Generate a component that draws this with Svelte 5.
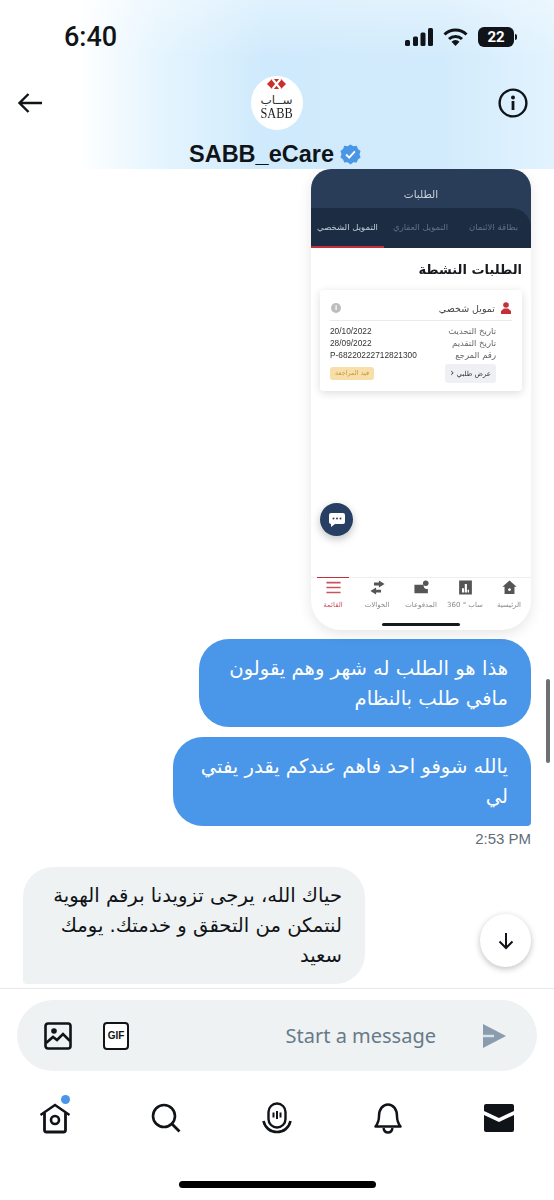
<script>
  const tabs = ['التمويل الشخصي', 'التمويل العقاري', 'بطاقة الائتمان']
  const details = [
    ['تاريخ التحديث', '20/10/2022'],
    ['تاريخ التقديم', '28/09/2022'],
    ['رقم المرجع', 'P-68220222712821300']
  ]
  const appNav = [
    { label: 'الرئيسية', icon: 'M2 11 12 2l10 9h-3v10H5V11Zm10 2a2 2 0 1 0 .01 0Z' },
    { label: 'ساب ° 360', icon: 'M3 2h18v20H3Zm4 11v6h3v-6Zm4-6v12h3V7Zm4 8v4h2v-4Z' },
    { label: 'المدفوعات', icon: 'M2 8h13v2a5 5 0 0 0 6 4v6H2Zm16-6a4 4 0 1 0 .01 0Z' },
    { label: 'الحوالات', icon: 'M14 2l8 5-8 5V9H7V5h7ZM10 12v3h7v4h-7v3l-8-5Z' },
    { label: 'القائمة', icon: 'M2 4h20v2.200H2Zm0 7h20v2.200H2Zm0 7h20v2.200H2Z', active: true }
  ]
</script>

<div class="screen">
  <header>
    <div class="status">
      <span class="clock">6:40</span>
      <div class="status-icons">
        <svg width="28" height="18" viewBox="0 0 28 18"><g fill="#101418"><rect x="0" y="12" width="5" height="6" rx="1.500"/><rect x="8" y="8.500" width="5" height="9.500" rx="1.500"/><rect x="15.500" y="4.500" width="5" height="13.500" rx="1.500"/><rect x="23" y="0" width="5" height="18" rx="1.500"/></g></svg>
        <svg width="25" height="18" viewBox="0 0 25 18"><g fill="none" stroke="#101418" stroke-width="3"><path d="M1.500 6.500a15.500 15.500 0 0 1 22 0"/><path d="M6 11a9.500 9.500 0 0 1 13 0"/></g><path d="M12.500 18l-4-4.300a5.800 5.800 0 0 1 8 0Z" fill="#101418"/></svg>
        <div class="battery"><span>22</span></div>
      </div>
    </div>
    <div class="profile-row">
      <svg class="back" width="26" height="22" viewBox="0 0 26 22"><path d="M25 11H2.500M11.500 2 2.500 11l9 9" fill="none" stroke="#101418" stroke-width="2.400"/></svg>
      <div class="avatar">
        <svg width="19" height="10" viewBox="0 0 19 10"><path d="M5 0h9l5 5-5 5H5L0 5Z" fill="#c9302c"/><path d="M5.500 0 13.500 10M13.500 0 5.500 10" stroke="#fff" stroke-width="2.200"/></svg>
        <span class="logo-ar">ســاب</span>
        <span class="logo-en">SABB</span>
      </div>
      <svg class="info" width="30" height="30" viewBox="0 0 30 30"><circle cx="15" cy="15" r="13.400" fill="none" stroke="#101418" stroke-width="2.400"/><circle cx="15" cy="9.500" r="2" fill="#101418"/><rect x="13.600" y="13" width="2.800" height="9" fill="#101418"/></svg>
    </div>
    <div class="name-row">
      <span class="name">SABB_eCare</span>
      <svg width="21" height="21" viewBox="0 0 24 24"><path d="M12 0l3.300 2 3.800-.4 1.400 3.500 3 2.400-1.200 3.600 1.200 3.700-3 2.300-1.400 3.600-3.800-.4L12 22.900l-3.300-2.600-3.800.4-1.400-3.600-3-2.300 1.200-3.700L.5 7.500l3-2.400 1.400-3.500 3.800.4Z" fill="#4a96e6" transform="translate(0 .5)"/><path d="M7 12l3.500 3.500L17 8.500" fill="none" stroke="#fff" stroke-width="2.200"/></svg>
    </div>
  </header>

  <main>
    <div class="attachment" dir="rtl">
      <div class="app-top">
        <div class="app-status" dir="ltr"><span>2:51</span><span>4G</span></div>
        <div class="app-title">الطلبات</div>
        <div class="app-tabs" dir="ltr">
          {#each tabs as tab, index (index)}
            <div class="app-tab" class:current={index === 0}>{tab}</div>
          {/each}
        </div>
      </div>
      <div class="app-body">
        <h2>الطلبات النشطة</h2>
        <div class="card">
          <div class="card-head">
            <svg width="10" height="12" viewBox="0 0 10 12"><circle cx="5" cy="3" r="2.800" fill="#c4303a"/><path d="M0 12V9l3-2.500h4L10 9v3Z" fill="#c4303a"/></svg>
            <span class="card-title">تمويل شخصي</span>
            <span class="card-info">i</span>
          </div>
          <div class="rows">
            {#each details as row, index (index)}
              <div class="row"><span>{row[0]}</span><b>{row[1]}</b></div>
            {/each}
          </div>
          <div class="card-foot">
            <span class="view-btn">عرض طلبي <i>&lsaquo;</i></span>
            <span class="pill">قيد المراجعة</span>
          </div>
        </div>
      </div>
      <div class="fab">
        <svg width="16" height="14" viewBox="0 0 16 14"><path d="M2 0h12a2 2 0 0 1 2 2v7a2 2 0 0 1-2 2H6l-4 3v-3a2 2 0 0 1-2-2V2a2 2 0 0 1 2-2Z" fill="#fff"/><g fill="#263f63"><circle cx="4.500" cy="5.500" r="1"/><circle cx="8" cy="5.500" r="1"/><circle cx="11.500" cy="5.500" r="1"/></g></svg>
      </div>
      <nav class="app-nav">
        {#each appNav as item, index (index)}
          <div class="app-nav-item" class:active={item.active}>
            <svg width="17" height="17" viewBox="0 0 24 24"><path d={item.icon} fill-rule="evenodd"/></svg>
            <span>{item.label}</span>
          </div>
        {/each}
      </nav>
      <div class="app-home"></div>
    </div>

    <div class="bubble mine first" dir="rtl">هذا هو الطلب له شهر وهم يقولون مافي طلب بالنظام</div>
    <div class="bubble mine last" dir="rtl">يالله شوفو احد فاهم عندكم يقدر يفتي لي</div>
    <div class="time">2:53 PM</div>
    <div class="bubble theirs" dir="rtl">حياك الله، يرجى تزويدنا برقم الهوية لنتمكن من التحقق و خدمتك. يومك سعيد</div>

    <div class="scrollbar"></div>
    <div class="down">
      <svg width="18" height="20" viewBox="0 0 18 20"><path d="M9 2v15M2.500 10.500 9 17l6.500-6.500" fill="none" stroke="#101418" stroke-width="2"/></svg>
    </div>
  </main>

  <div class="composer-wrap">
    <div class="composer">
      <svg width="28" height="28" viewBox="0 0 28 28"><rect x="1.500" y="1.500" width="25" height="25" rx="2.500" fill="none" stroke="#101418" stroke-width="2.600"/><circle cx="10" cy="9" r="2.800" fill="#101418"/><path d="M2 21l7-6 4 3 6-6 7 7" fill="none" stroke="#101418" stroke-width="2.600"/></svg>
      <div class="gif"><span>GIF</span></div>
      <span class="placeholder">Start a message</span>
      <svg class="send" width="26" height="26" viewBox="0 0 26 26"><path d="M2 1l23 12L2 25Z" fill="#8a9dae"/><path d="M2 11.800h11v2.400H2Z" fill="#dbe3e9"/></svg>
    </div>
  </div>

  <nav class="tabbar">
    <div class="tab">
      <svg width="32" height="32" viewBox="0 0 32 32"><path d="M1.500 13 16 3l14.500 10" fill="none" stroke="#101418" stroke-width="2.400"/><path d="M5.500 11v17a2 2 0 0 0 2 2h17a2 2 0 0 0 2-2V11" fill="none" stroke="#101418" stroke-width="2.800"/><circle cx="16" cy="18" r="4" fill="none" stroke="#101418" stroke-width="2.600"/></svg>
      <span class="dot"></span>
    </div>
    <div class="tab">
      <svg width="30" height="30" viewBox="0 0 30 30"><circle cx="13" cy="13" r="11" fill="none" stroke="#101418" stroke-width="2.600"/><path d="M21 21l7.500 7.500" stroke="#101418" stroke-width="2.800"/></svg>
    </div>
    <div class="tab">
      <svg width="30" height="32" viewBox="0 0 30 32"><rect x="6.500" y="1.500" width="17" height="24" rx="8.500" fill="none" stroke="#101418" stroke-width="2.400"/><path d="M11.500 10.500v5M15 9v8M18.500 10.500v5" stroke="#101418" stroke-width="2"/><path d="M1.500 19c1.500 7 7 11 13.500 11s12-4 13.500-11" fill="none" stroke="#101418" stroke-width="2.600"/></svg>
    </div>
    <div class="tab">
      <svg width="28" height="32" viewBox="0 0 28 32"><path d="M1.500 24.500C3.500 22 5 20 5 14c0-7 4-11.500 9-11.500S23 7 23 14c0 6 1.500 8 3.500 10.500Z" fill="none" stroke="#101418" stroke-width="2.500" stroke-linejoin="round"/><path d="M9.500 26c.5 3 2.300 4.500 4.500 4.500s4-1.500 4.500-4.500" fill="none" stroke="#101418" stroke-width="2.400"/></svg>
    </div>
    <div class="tab">
      <svg width="30" height="28" viewBox="0 0 30 28"><path d="M2 0h26a2 2 0 0 1 2 2v5L15 14 0 7V2a2 2 0 0 1 2-2Z" fill="#101418"/><path d="M0 11l15 7 15-7v15a2 2 0 0 1-2 2H2a2 2 0 0 1-2-2Z" fill="#101418"/></svg>
    </div>
  </nav>
  <div class="home-wrap"><div class="home-bar"></div></div>
</div>

<style>
:global(body) {
  margin: 0;
  background: #fff;
}

.screen {
  position: relative;
  width: 554px;
  height: 1200px;
  display: flex;
  flex-direction: column;
  overflow: hidden;
  color: #101418;
  font-family: "DejaVu Sans", sans-serif;
}

header {
  height: 169px;
  flex-shrink: 0;
  box-sizing: border-box;
  background:
    linear-gradient(180deg, rgba(255, 255, 255, 0.35), rgba(255, 255, 255, 0) 35%),
    linear-gradient(90deg, #fff 14%, #e6f5fe 28%, #cfeafc 48%, #d2ebfc 80%, #e2f3fe 100%);
  z-index: 1;
}

.status {
  height: 22px;
  padding: 26px 39px 0 64px;
  display: flex;
  justify-content: space-between;
  align-items: center;
}

.clock {
  font: 500 27px Roboto, sans-serif;
}

.status-icons {
  display: flex;
  align-items: center;
  gap: 10px;
}

.battery {
  position: relative;
  width: 36px;
  height: 20px;
  border-radius: 6px;
  background: #101418;
  color: #fff;
  display: flex;
  align-items: center;
  justify-content: center;
  margin-right: 1px;
  font: 700 15px Roboto, sans-serif;
}

.battery::after {
  content: "";
  position: absolute;
  right: -3px;
  top: 7px;
  width: 2px;
  height: 6px;
  background: #101418;
  border-radius: 0 2px 2px 0;
}

.profile-row {
  margin-top: 29px;
  padding: 0 26px 0 17px;
  height: 52px;
  display: flex;
  align-items: center;
  justify-content: space-between;
}

.avatar {
  width: 52px;
  height: 54px;
  margin-left: 12px;
  border-radius: 50%;
  background: #fff;
  display: flex;
  flex-direction: column;
  align-items: center;
  padding-top: 3px;
  box-sizing: border-box;
}

.logo-ar {
  font-size: 12px;
  line-height: 13px;
  margin-top: 5px;
  color: #333;
}

.logo-en {
  font: 15px/12px "Liberation Serif", serif;
  color: #222;
  transform: scaleX(0.82);
}

.name-row {
  margin-top: 9px;
  display: flex;
  justify-content: center;
  align-items: center;
  gap: 6px;
  padding-right: 4px;
}

.name {
  font: 700 23.500px/32px "Liberation Sans", sans-serif;
}

main {
  position: relative;
  flex: 1;
  min-height: 0;
  display: flex;
  flex-direction: column;
  align-items: flex-end;
  padding: 0 23px 0 23px;
  overflow: hidden;
}

.attachment {
  position: relative;
  width: 220px;
  height: 461px;
  flex-shrink: 0;
  background: #fff;
  border-radius: 20px 20px 30px 30px;
  box-shadow: 0 4px 14px rgba(0, 0, 0, 0.1);
  display: flex;
  flex-direction: column;
  overflow: hidden;
  filter: blur(0.25px);
}

.app-top {
  background: #2a3d58;
  height: 79px;
  display: flex;
  flex-direction: column;
  flex-shrink: 0;
}

.app-status {
  height: 4px;
  overflow: hidden;
  display: flex;
  justify-content: space-between;
  padding: 0 16px 0 28px;
  font-size: 9px;
  line-height: 0;
  color: #e8edf3;
}

.app-title {
  height: 39px;
  line-height: 50px;
  text-align: center;
  font-size: 10.500px;
  color: #c9d1dc;
}

.app-tabs {
  flex: 1;
  display: flex;
  background: #1c2c42;
  border-radius: 0 20px 0 0;
}

.app-tab {
  width: 73px;
  text-align: center;
  font-size: 8.500px;
  line-height: 38px;
  color: #5f7088;
  white-space: nowrap;
  box-sizing: border-box;
}

.app-tab.current {
  color: #c3ccd7;
  border-bottom: 2px solid #c4303a;
}

.app-body {
  flex: 1;
  padding: 10px 9px 0 9px;
}

h2 {
  margin: 0;
  font-size: 13px;
  line-height: 24px;
  font-weight: 700;
  color: #16191d;
}

.card {
  margin-top: 8px;
  height: 101px;
  box-sizing: border-box;
  padding: 8px 10px;
  border-radius: 3px;
  background: #fff;
  box-shadow: 0 2px 9px rgba(0, 0, 0, 0.14);
  display: flex;
  flex-direction: column;
}

.card-head {
  height: 20px;
  display: flex;
  align-items: center;
  gap: 6px;
  padding-bottom: 2px;
  padding-right: 1px;
  border-bottom: 1px solid #e9eaec;
}

.card-title {
  font-size: 9.500px;
  color: #444;
  flex: 1;
}

.card-info {
  width: 10px;
  height: 10px;
  margin-left: 1px;
  border-radius: 50%;
  background: #bdbdbd;
  color: #fff;
  font: 700 8px/10px "Liberation Sans", sans-serif;
  text-align: center;
}

.rows {
  margin-top: 4px;
  padding-right: 16px;
}

.row {
  display: flex;
  justify-content: space-between;
  font-size: 8.500px;
  line-height: 12px;
  color: #666;
}

.row b {
  font: 400 8.300px/12px "Liberation Sans", sans-serif;
  color: #333;
}

.card-foot {
  margin-top: 3px;
  padding-right: 16px;
  display: flex;
  justify-content: space-between;
  align-items: center;
}

.view-btn {
  background: #eff0f3;
  border-radius: 3px;
  padding: 0 5px;
  font-size: 7px;
  line-height: 17px;
  color: #333;
}

.view-btn i {
  font-style: normal;
  font-size: 10px;
}

.pill {
  background: #f8dea9;
  border-radius: 3px;
  padding: 0 5px;
  font-size: 6.500px;
  line-height: 13px;
  color: #c49a45;
}

.fab {
  position: absolute;
  left: 9px;
  top: 334px;
  width: 33px;
  height: 33px;
  border-radius: 50%;
  background: #263f63;
  box-shadow: 0 3px 8px rgba(0, 0, 0, 0.25);
  display: flex;
  align-items: center;
  justify-content: center;
}

.app-nav {
  display: grid;
  grid-template-columns: repeat(5, 44px);
  height: 45px;
  border-top: 1px solid #eeeeee;
}

.app-nav-item {
  padding-top: 1px;
  display: flex;
  flex-direction: column;
  align-items: center;
  fill: #555;
  font-size: 7px;
  line-height: 12px;
  white-space: nowrap;
  color: #888;
}

.app-nav-item svg {
  margin-bottom: 3px;
}

.app-nav-item.active {
  fill: #c9555c;
  color: #c9555c;
  width: 32px;
  justify-self: center;
  border-top: 1px solid #c4303a;
  margin-top: -1px;
}

.app-home {
  width: 78px;
  height: 3px;
  margin: 0 auto 4px;
  border-radius: 2px;
  background: #16191d;
}

.bubble {
  box-sizing: border-box;
  font-size: 19.600px;
  line-height: 30px;
  padding: 15px 23px 14px 14px;
}

.mine {
  background: #4a96e8;
  color: #fff;
}

.first {
  margin-top: 9px;
  width: 332px;
  height: 88px;
  border-radius: 30px;
}

.last {
  margin-top: 10px;
  width: 358px;
  height: 89px;
  border-radius: 30px 30px 4px 30px;
}

.time {
  margin-top: 3px;
  font: 400 15px/20px "Liberation Sans", sans-serif;
  color: #5f6d78;
}

.theirs {
  align-self: flex-start;
  margin-top: 18px;
  width: 342px;
  height: 117px;
  flex-shrink: 0;
  background: #eff2f3;
  border-radius: 30px 30px 30px 4px;
  color: #101418;
  padding-top: 14px;
}

.scrollbar {
  position: absolute;
  right: 4px;
  top: 510px;
  width: 4px;
  height: 84px;
  border-radius: 2px;
  background: #6b7075;
}

.down {
  position: absolute;
  left: 480px;
  top: 745px;
  width: 51px;
  height: 53px;
  border-radius: 50%;
  background: #fff;
  box-shadow: 0 2px 6px rgba(0, 0, 0, 0.25);
  display: flex;
  align-items: center;
  justify-content: center;
}

.composer-wrap {
  border-top: 1px solid #e6e8ea;
  padding: 11px 17px 0;
}

.composer {
  height: 71px;
  border-radius: 36px;
  background: #eff2f3;
  display: flex;
  align-items: center;
  padding: 0 30px 0 27px;
}

.gif {
  margin-left: 31px;
  width: 26px;
  height: 28px;
  box-sizing: border-box;
  border: 2.500px solid #101418;
  border-radius: 4px;
  display: flex;
  align-items: center;
  justify-content: center;
  background: #fff;
  font: 700 10px "Liberation Sans", sans-serif;
}

.placeholder {
  margin-left: auto;
  margin-right: 45px;
  font: 400 20px "Noto Sans", sans-serif;
  color: #677a89;
}

.tabbar {
  margin-top: 29px;
  height: 36px;
  padding: 0 39px;
  display: flex;
  justify-content: space-between;
  align-items: center;
}

.tab {
  position: relative;
  width: 32px;
  display: flex;
  justify-content: center;
}

.dot {
  position: absolute;
  left: 22px;
  top: -7px;
  width: 9px;
  height: 9px;
  border-radius: 50%;
  background: #4a96e8;
}

.home-wrap {
  flex: 0 0 64px;
  display: flex;
  justify-content: center;
  padding-top: 45px;
  box-sizing: border-box;
}

.home-bar {
  width: 197px;
  height: 7px;
  border-radius: 4px;
  background: #000;
}
</style>
